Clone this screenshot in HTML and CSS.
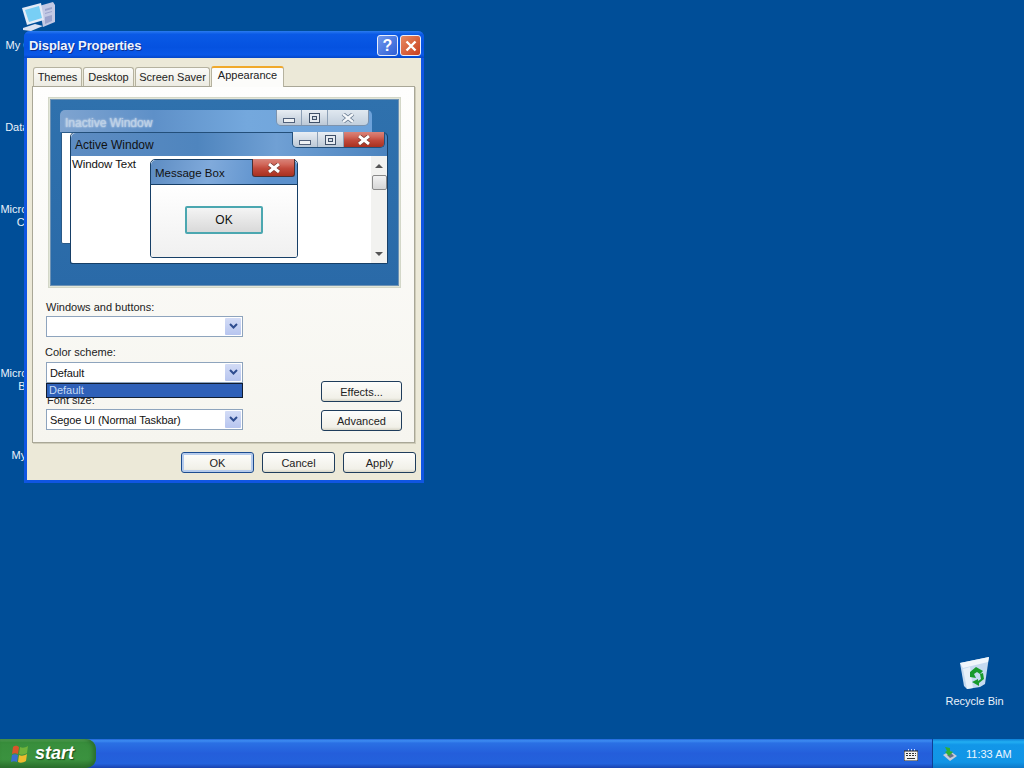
FILE: index.html
```html
<!DOCTYPE html>
<html lang="en">
<head>
<meta charset="utf-8">
<title>Display Properties</title>
<link rel="stylesheet" href="styles.css">
</head>
<body>
<div class="desktop">
  <div class="screen">
    <div class="icon icon-computer">
      <svg class="glyph" viewBox="0 0 34 30" width="34" height="30">
        <path d="M17 4L31 0l2 3v17l-12 5z" fill="#c3c9e4"/>
        <path d="M23 7l7-2v2l-7 2zM23 11l7-2v1l-7 2zM23 15l7-2v6l-7 3z" fill="#9aa3cc"/>
        <path d="M0 6L19 1l3 17-17 5z" fill="#e3ebf7"/>
        <path d="M3 8l14-4 3 12-13 4z" fill="#78cff5"/>
        <path d="M1 26l12-4 8 2-12 5-8-1z" fill="#dbe2f2"/>
      </svg>
      <span class="label">My Computer</span>
    </div>
    <div class="icon icon-data"><span class="label">Data Sources</span></div>
    <div class="icon icon-office"><span class="label">Microsoft Office<br>Contacts</span></div>
    <div class="icon icon-bing"><span class="label">Microsoft Office<br>Browser</span></div>
    <div class="icon icon-music"><span class="label">My Network</span></div>
    <div class="icon icon-bin">
      <svg class="glyph" viewBox="0 0 30 32" width="30" height="32">
        <path d="M0 6L29 0l-4 27-5 3-13 2-3-3z" fill="#c5daf0"/>
        <path d="M0 6L29 0l-1 5L3 11z" fill="#f0f6fc"/>
        <path d="M3 12l7-2 3 21-6 1z" fill="#e6f0f9"/>
        <path d="M10 15l6-5 7 4-3 3-3-2-3 2 2 4-6-1zM23 16l1 6-5 4v3l-7-4 6-3v2l3-2-1-5z" fill="#189a2c"/>
      </svg>
      <span class="label">Recycle Bin</span>
    </div>

    <section class="dialog">
      <header class="titlebar">
        <span class="title">Display Properties</span>
        <span class="capbtn help">?</span>
        <span class="capbtn close">
          <svg viewBox="0 0 12 12" width="12" height="12"><path d="M1.500 1.500l9 9M10.500 1.500l-9 9" stroke="#fff" stroke-width="2.400"/></svg>
        </span>
      </header>
      <div class="client">
        <nav class="tabs">
          <span class="tab tab-themes">Themes</span>
          <span class="tab tab-desktop">Desktop</span>
          <span class="tab tab-saver">Screen Saver</span>
          <span class="tab tab-active">Appearance</span>
        </nav>
        <div class="panel">
          <div class="preview">
            <div class="pwin inactive">
              <div class="ptitle faded">Inactive Window</div>
              <div class="pcaps caps-inactive">
                <span class="pcap"><i class="min"></i></span>
                <span class="pcap pcap-mid"><i class="max"></i></span>
                <span class="pcap pcap-x faded-x">
                  <svg viewBox="0 0 14 10" width="14" height="10"><path d="M2 1l10 8M12 1L2 9" stroke="#66788f" stroke-width="4"/><path d="M2 1l10 8M12 1L2 9" stroke="#f4f7fa" stroke-width="2.400"/></svg>
                </span>
              </div>
              <div class="pbody"></div>
            </div>
            <div class="pwin active">
              <div class="ptitle">Active Window</div>
              <div class="pcaps caps-active">
                <span class="pcap"><i class="min"></i></span>
                <span class="pcap pcap-mid"><i class="max"></i></span>
                <span class="pcap pcap-x red">
                  <svg viewBox="0 0 14 10" width="14" height="10"><path d="M2 1l10 8M12 1L2 9" stroke="#7b3a30" stroke-width="4.500"/><path d="M2 1l10 8M12 1L2 9" stroke="#fff" stroke-width="3"/></svg>
                </span>
              </div>
              <div class="pbody pbody-active">
                <span class="wintext">Window Text</span>
                <div class="scroll">
                  <span class="arrow-up"></span>
                  <span class="thumb"></span>
                  <span class="arrow-down"></span>
                </div>
              </div>
            </div>
            <div class="pwin msg">
              <div class="ptitle">Message Box</div>
              <span class="msgclose red">
                <svg viewBox="0 0 14 10" width="14" height="10"><path d="M2 1l10 8M12 1L2 9" stroke="#7b3a30" stroke-width="4.500"/><path d="M2 1l10 8M12 1L2 9" stroke="#fff" stroke-width="3"/></svg>
              </span>
              <div class="pbody msgbody"><span class="msgok">OK</span></div>
            </div>
          </div>

          <div class="form">
            <div class="fields">
              <label class="flabel">Windows and buttons:</label>
              <div class="combo"><span class="val"></span><span class="drop"><svg viewBox="0 0 9 7" width="9" height="7"><path d="M1 1l3.500 3.500L8 1" fill="none" stroke="#2f4d8f" stroke-width="2"/></svg></span></div>
              <label class="flabel flabel-gap">Color scheme:</label>
              <div class="combo-wrap">
                <div class="combo"><span class="val">Default</span><span class="drop"><svg viewBox="0 0 9 7" width="9" height="7"><path d="M1 1l3.500 3.500L8 1" fill="none" stroke="#2f4d8f" stroke-width="2"/></svg></span></div>
                <div class="droplist">Default</div>
              </div>
              <label class="flabel flabel-font">Font size:</label>
              <div class="combo"><span class="val">Segoe UI (Normal Taskbar)</span><span class="drop"><svg viewBox="0 0 9 7" width="9" height="7"><path d="M1 1l3.500 3.500L8 1" fill="none" stroke="#2f4d8f" stroke-width="2"/></svg></span></div>
            </div>
            <div class="sidebtns">
              <span class="btn btn-side">Effects...</span>
              <span class="btn btn-side">Advanced</span>
            </div>
          </div>
        </div>
        <footer class="actions">
          <span class="btn btn-act btn-default">OK</span>
          <span class="btn btn-act">Cancel</span>
          <span class="btn btn-act">Apply</span>
        </footer>
      </div>
    </section>
  </div>

  <div class="taskbar">
    <div class="start">
      <svg viewBox="0 0 20 20" width="20" height="20">
        <path d="M3 3c3-2 4-1 6 0l-1 7c-2-1-4-1-6 0z" fill="#d9552b"/>
        <path d="M10 3c2 1 5 1 8-1l-1 7c-3 2-6 2-8 1z" fill="#6fb33b"/>
        <path d="M2 11c2-1 4-1 6 0l-1 7c-2-1-4-1-6 0z" fill="#3a6fd0"/>
        <path d="M9 11c2 1 5 1 8-1l-1 7c-3 2-6 2-8 1z" fill="#edbb2d"/>
      </svg>
      <span class="start-text">start</span>
    </div>
    <div class="task-space"></div>
    <div class="kbd">
      <svg viewBox="0 0 14 12" width="14" height="12">
        <path d="M4 0h1v2H4zM7 0h1v2H7zM10 0h1v2h-1z" fill="#cfe0ff"/>
        <rect x="0" y="2" width="14" height="10" fill="#f2f2f2" stroke="#222" stroke-width="1"/>
        <path d="M2 4h2v1H2zM5 4h2v1H5zM8 4h2v1H8zM11 4h1v1h-1zM2 6h2v1H2zM5 6h2v1H5zM8 6h2v1H8zM11 6h1v1h-1zM3 9h8v1H3z" fill="#333"/>
      </svg>
    </div>
    <div class="tray">
      <svg viewBox="0 0 16 16" width="16" height="16">
        <path d="M1 9l7-4 7 5-7 5z" fill="#c8ccd8"/>
        <path d="M5 9l4-2 3 3-4 2z" fill="#66708a"/>
        <path d="M3 1l5 1v3l3 1-4 4-4-4 2-1z" fill="#2fae35"/>
      </svg>
      <span class="clock">11:33 AM</span>
    </div>
  </div>
</div>
</body>
</html>
```

FILE: styles.css
```css
* { box-sizing: border-box; }
html, body { margin: 0; height: 100%; overflow: hidden; }
body { font-family: "Liberation Sans", Arial, sans-serif; font-size: 11px; color: #111; background: #004e98; }

.desktop { width: 1024px; height: 768px; display: flex; flex-direction: column; }
.screen { position: relative; flex: 1; background: #004e98; }

/* desktop icons */
.icon { position: absolute; width: 75px; display: flex; flex-direction: column; align-items: center; color: #fff; text-align: center; }
.label { line-height: 13px; font-size: 11px; color: #eaf2fb; white-space: nowrap; }
.glyph { display: block; }
.icon-computer { left: 1px; top: 2px; }
.icon-computer .glyph { margin-bottom: 7px; }
.icon-data { left: 1px; top: 121px; }
.icon-office { left: 1px; top: 203px; }
.icon-bing { left: 1px; top: 367px; }
.icon-music { left: 3px; top: 449px; }
.icon-bin { left: 937px; top: 657px; }
.icon-bin .glyph { margin-bottom: 6px; }

/* dialog */
.dialog { position: absolute; left: 24px; top: 31px; width: 400px; height: 452px; display: flex; flex-direction: column; padding: 0 3px 3px; border-radius: 6px 6px 0 0; background: #0f55e2; }
.titlebar { height: 27px; margin: 0 -3px; padding: 2px 3px 0 5px; display: flex; align-items: center; gap: 2px; border-radius: 6px 6px 0 0; background: linear-gradient(#2a7bf0 0, #0a5ae6 12%, #0552e0 60%, #0a58e8 88%, #0446c8 100%); }
.title { flex: 1; font-size: 13px; font-weight: bold; letter-spacing: -.1px; color: #eef4ff; text-shadow: 1px 1px 0 #0a2f90; }
.capbtn { width: 21px; height: 21px; border: 1px solid #e8eefc; border-radius: 3px; display: flex; align-items: center; justify-content: center; color: #fff; font-weight: bold; font-size: 16px; }
.help { background: linear-gradient(135deg, #6f98ec, #2e5fd6); }
.close { background: linear-gradient(135deg, #e88a62, #c9401e); }
.client { flex: 1; display: flex; flex-direction: column; background: #ece9d8; padding: 8px 6px 0 5px; min-height: 0; }

/* tabs */
.tabs { height: 20px; padding-left: 1px; display: flex; align-items: flex-end; gap: 1px; position: relative; z-index: 1; }
.tab { height: 19px; padding-top: 3px; text-align: center; white-space: nowrap; border: 1px solid #b5b29f; border-bottom: 0; border-radius: 3px 3px 0 0; background: linear-gradient(#fbfbf8, #ecebe2); color: #222; }
.tab-themes { width: 49px; }
.tab-desktop { width: 51px; }
.tab-saver { width: 75px; }
.tab-active { width: 73px; height: 21px; margin-bottom: -1px; background: #fcfcfa; border-color: #b5b29f; border-top: 2px solid #f0a92c; padding-top: 1px; }

/* panel */
.panel { height: 357px; border: 1px solid #a9a797; background: linear-gradient(#fefefd, #f6f5ef); padding: 11px 11px 0 13px; display: flex; flex-direction: column; box-shadow: 1px 1px 0 #cfccb9; }

/* preview */
.preview { position: relative; width: 351px; height: 189px; margin-left: 3px; background: linear-gradient(#2f71ad, #2a6aa8); border: 1px solid #e2e6d8; outline: 1px solid #d3d7c8; flex: none; box-shadow: inset 0 0 0 1px #6e92b4; }
.pwin { position: absolute; border-radius: 5px 5px 0 0; }
.ptitle { height: 24px; padding: 5px 0 0 5px; font-size: 12px; color: #111; background: linear-gradient(90deg, #7fa4d0, #5e90c8 30%, #74a8dd 60%, #6da2da); border-radius: 5px 5px 0 0; }
.inactive { left: 10px; top: 11px; width: 312px; height: 134px; }
.faded { color: #bcd0e6; text-shadow: 0 0 2px #fff; padding-top: 6px; }
.active { left: 20px; top: 33px; width: 318px; height: 132px; border: 1px solid #173f67; border-top-color: #234f7a; border-radius: 5px 5px 2px 2px; }
.msg { left: 100px; top: 60px; width: 148px; height: 99px; border: 1px solid #173f67; border-radius: 5px 5px 3px 3px; }
.pbody { height: 110px; background: #fff; border: 1px solid #2a5a88; border-radius: 0 0 2px 2px; }
.inactive .ptitle { height: 22px; }
.inactive .pbody { height: 112px; margin-left: 1px; }
.pbody-active { position: relative; height: 107px; border: 0; margin-top: -1px; }
.active .ptitle { padding-left: 4px; background: linear-gradient(90deg, #5d8cc2, #4f85be 40%, #70a0d4 65%, #4b83be); }
.wintext { position: absolute; left: 1px; top: 2px; font-size: 11.500px; letter-spacing: -.1px; }
.pcaps { position: absolute; height: 16px; display: flex; border-radius: 0 0 5px 5px; overflow: hidden; border: 1px solid #7d93ad; border-top: 0; }
.caps-inactive { right: 3px; top: 0; width: 93px; }
.caps-active { right: 2px; top: -1px; width: 93px; border-color: #22507c; }
.pcap { flex: 25; display: flex; align-items: center; justify-content: center; background: linear-gradient(#e8eef4, #bcc8d6); border-right: 1px solid #8da0b6; }
.pcap-mid { flex: 26; }
.pcap-x { flex: 42; border-right: 0; }
.faded-x { background: linear-gradient(#e0e8f0, #c2cfdd); }
.red { background: linear-gradient(#d8847a, #d2695c 30%, #c24a3c 55%, #a8301f); }
.min { display: block; width: 12px; height: 5px; margin-top: 5px; border: 1px solid #50607a; background: #eef1f4; }
.max { display: block; width: 11px; height: 10px; border: 1px solid #3f5068; box-shadow: inset 0 0 0 2px #e6ebf1, inset 0 0 0 3px #3f5068; }
.scroll { position: absolute; right: 0; top: 0; width: 16px; height: 100%; background: #f2f2f0; display: flex; flex-direction: column; align-items: center; }
.arrow-up { margin-top: 8px; border: 4px solid transparent; border-top: 0; border-bottom: 4px solid #555; }
.thumb { width: 15px; height: 15px; margin-top: 7px; background: linear-gradient(#f2f2f2, #d6d6d6); border: 1px solid #8a8a8a; border-radius: 2px; }
.arrow-down { margin-top: auto; margin-bottom: 7px; border: 4px solid transparent; border-bottom: 0; border-top: 4px solid #555; }
.msg .ptitle { height: 24px; padding-top: 7px; padding-left: 4px; font-size: 11.500px; background: linear-gradient(100deg, #5d8cc2, #80aadb 40%, #5b90cc 80%); }
.msgclose { position: absolute; right: 2px; top: -1px; width: 43px; height: 18px; display: flex; align-items: center; justify-content: center; border: 1px solid #4a3034; border-top: 0; border-radius: 0 0 3px 3px; }
.msgbody { height: 73px; margin: 0; border: 0; border-top: 1px solid #173f67; background: linear-gradient(#fff, #f0f0f0); position: relative; }
.msgok { position: absolute; left: 34px; top: 21px; width: 78px; height: 28px; display: flex; align-items: center; justify-content: center; border: 2px solid #4ba7b0; border-radius: 2px; background: linear-gradient(#f4f4f4, #d9d9d9); font-size: 12px; }

/* form */
.form { display: flex; justify-content: space-between; margin-top: 13px; }
.fields { width: 197px; display: flex; flex-direction: column; }
.flabel { display: block; height: 16px; line-height: 15px; color: #222; }
.flabel-gap { margin-top: 8px; height: 17px; margin-left: -1px; }
.flabel-font { position: relative; height: 11px; line-height: 5px; margin-top: 15px; margin-left: 1px; }
.combo { height: 21px; display: flex; align-items: center; background: #fff; border: 1px solid #8ea4bd; padding: 0 1px 0 3px; }
.val { flex: 1; color: #111; letter-spacing: -.1px; }
.drop { width: 16px; height: 17px; display: flex; align-items: center; justify-content: center; background: linear-gradient(#d3dcf6, #b7c5ef); border-radius: 1px; }
.combo-wrap { position: relative; height: 21px; }
.droplist { position: absolute; left: 0; top: 21px; width: 197px; height: 15px; z-index: 2; line-height: 13px; padding-left: 2px; color: #c6daf5; background: #2f60b8; border: 1px solid #101c30; }
.sidebtns { width: 81px; margin-top: 81px; margin-right: 1px; display: flex; flex-direction: column; gap: 8px; }

/* buttons */
.btn { display: flex; align-items: center; justify-content: center; height: 21px; border: 1px solid #1f3d5c; border-radius: 3px; background: linear-gradient(#fdfdfb, #f1f0e8 85%, #d8d6c8); color: #222; }
.actions { flex: 1; display: flex; justify-content: flex-end; gap: 8px; padding: 9px 0 0; margin-right: -1px; }
.btn-act { width: 73px; }
.btn-default { border-color: #1c4c90; box-shadow: inset 0 0 0 2px #b5cbec; }

/* taskbar */
.taskbar { height: 29px; display: flex; background: linear-gradient(#1f63d8 0, #3d8cf2 6%, #2a70e4 14%, #245edb 50%, #2362dc 85%, #1942af 100%); }
.start { width: 96px; display: flex; align-items: center; gap: 5px; padding-left: 10px; background: linear-gradient(#5da85d 0, #388e3c 12%, #3b923f 70%, #2a6e2c 100%); border-radius: 0 10px 10px 0; box-shadow: inset -3px 0 4px #2a6e2c; }
.start-text { font-size: 18px; font-weight: bold; font-style: italic; color: #fff; text-shadow: 1px 1px 1px #1a4a1a; margin-top: -1px; }
.task-space { flex: 1; }
.kbd { width: 37px; display: flex; align-items: center; padding-left: 9px; padding-top: 2px; }
.tray { width: 92px; display: flex; align-items: center; gap: 8px; padding-left: 9px; background: linear-gradient(#0c7fd8 0, #22aef2 10%, #1296e8 20%, #1195e6 80%, #0d78c8 100%); border-left: 1px solid #0f3f95; }
.clock { color: #eaf5ff; font-size: 11px; }
```
